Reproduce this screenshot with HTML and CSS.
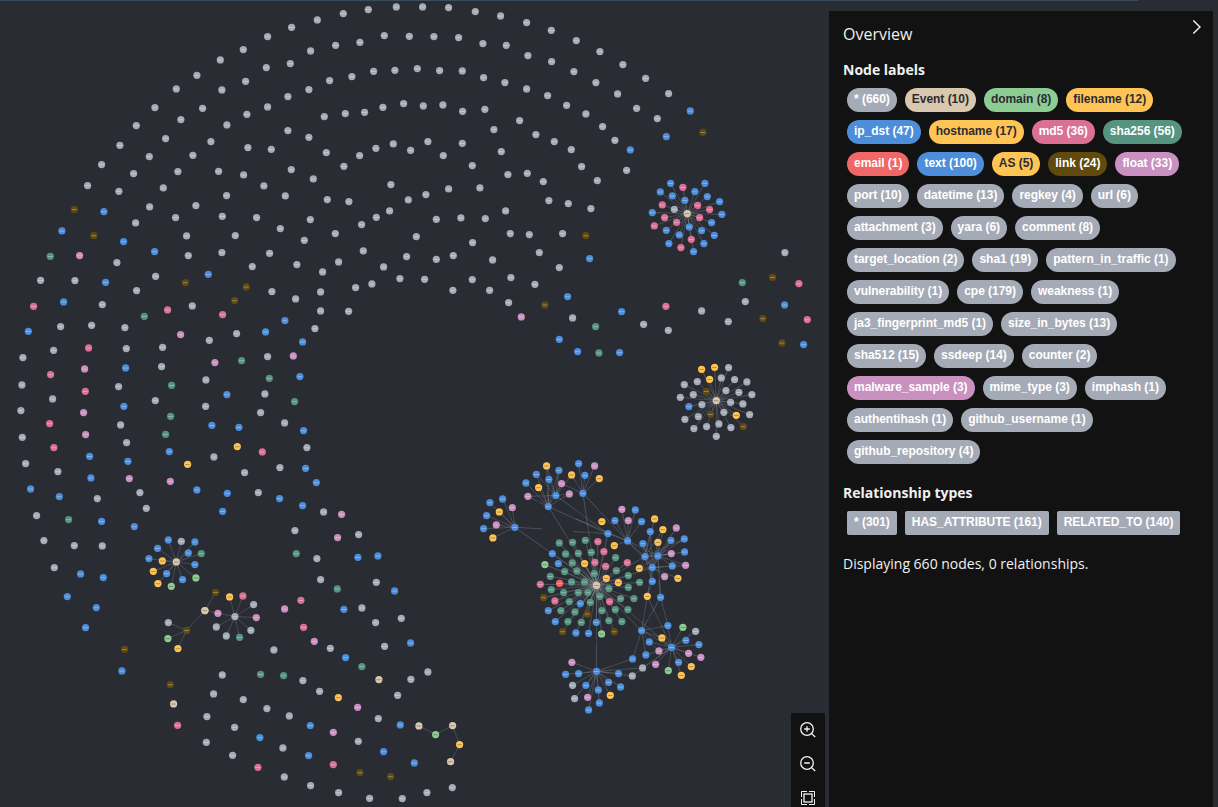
FILE: index.html
```html
<!DOCTYPE html>
<html lang="en">
<head>
<meta charset="utf-8">
<title>Graph overview</title>
<link rel="stylesheet" href="styles.css">
</head>
<body>
<div class="progress"></div>
<main class="frame">
  <section class="canvas">
    <svg class="graph" id="graph" width="829" height="807" viewBox="0 0 829 807"></svg>
    <div class="zoom-controls">
      <button class="zoom-button" aria-label="Zoom in">
        <svg width="18" height="18" viewBox="0 0 18 18"><circle cx="8" cy="8" r="6.3"/><path d="M12.6 12.6 16.2 16M8 5.2v5.6M5.2 8h5.6"/></svg>
      </button>
      <button class="zoom-button" aria-label="Zoom out">
        <svg width="18" height="18" viewBox="0 0 18 18"><circle cx="8" cy="8" r="6.3"/><path d="M12.6 12.6 16.2 16M5.2 8h5.6"/></svg>
      </button>
      <button class="zoom-button" aria-label="Zoom to fit">
        <svg width="18" height="18" viewBox="0 0 18 18"><rect x="5" y="5" width="8" height="8"/><path class="corners" d="M2.5 8V2.500H8M10 2.500h5.500V8M15.500 10v5.500H10M8 15.500H2.500V10"/></svg>
      </button>
    </div>
  </section>
  <aside class="panel">
    <header class="panel-head">
      <h2 class="panel-title">Overview</h2>
      <svg class="chevron" width="12" height="18" viewBox="0 0 12 18"><path d="M2.300 2.500 9 9l-6.700 6.500"/></svg>
    </header>
    <h3 class="panel-subtitle">Node labels</h3>
    <div class="chips">
      <span class="chip">* (660)</span><span class="chip event">Event (10)</span><span class="chip domain">domain (8)</span><span class="chip amber">filename (12)</span>
      <span class="chip blue">ip_dst (47)</span><span class="chip amber">hostname (17)</span><span class="chip rose">md5 (36)</span><span class="chip teal">sha256 (56)</span>
      <span class="chip red">email (1)</span><span class="chip blue">text (100)</span><span class="chip amber">AS (5)</span><span class="chip brown">link (24)</span><span class="chip orchid">float (33)</span>
      <span class="chip">port (10)</span><span class="chip">datetime (13)</span><span class="chip">regkey (4)</span><span class="chip">url (6)</span>
      <span class="chip">attachment (3)</span><span class="chip">yara (6)</span><span class="chip">comment (8)</span>
      <span class="chip">target_location (2)</span><span class="chip">sha1 (19)</span><span class="chip">pattern_in_traffic (1)</span>
      <span class="chip">vulnerability (1)</span><span class="chip">cpe (179)</span><span class="chip">weakness (1)</span>
      <span class="chip">ja3_fingerprint_md5 (1)</span><span class="chip">size_in_bytes (13)</span>
      <span class="chip">sha512 (15)</span><span class="chip">ssdeep (14)</span><span class="chip">counter (2)</span>
      <span class="chip orchid">malware_sample (3)</span><span class="chip">mime_type (3)</span><span class="chip">imphash (1)</span>
      <span class="chip">authentihash (1)</span><span class="chip">github_username (1)</span>
      <span class="chip">github_repository (4)</span>
    </div>
    <h3 class="panel-subtitle relations">Relationship types</h3>
    <div class="chips">
      <span class="chip square">* (301)</span><span class="chip square">HAS_ATTRIBUTE (161)</span><span class="chip square">RELATED_TO (140)</span>
    </div>
    <p class="summary">Displaying 660 nodes, 0 relationships.</p>
  </aside>
</main>
<script src="graph.js"></script>
</body>
</html>
```
FILE: styles.css
```css
* { box-sizing: border-box; }
body {
  margin: 0;
  height: 807px;
  overflow: hidden;
  background: #2a2c34;
  font-family: "Open Sans", "Noto Sans", sans-serif;
  color: #f0f0f0;
}
.progress { position: absolute; top: 0; left: 0; width: 1138px; height: 1px; background: #3a4c5d; }
.frame { display: flex; height: 807px; }
.canvas { position: relative; width: 829px; flex: none; }
.graph { display: block; }
.edge { stroke: #a5abb6; stroke-width: .6; stroke-opacity: .5; }
.edge-label { stroke: #2a2c34; stroke-width: 1; stroke-dasharray: 1 1.2; stroke-opacity: .7; }
.caption { fill: #fff; fill-opacity: .38; }
.caption.dark { fill: #2a2c34; fill-opacity: .38; }

.zoom-controls {
  position: absolute;
  right: 4px;
  bottom: 0;
  width: 34px;
  height: 94px;
  overflow: hidden;
  background: #121212;
}
.zoom-button {
  display: flex;
  align-items: center;
  justify-content: center;
  width: 34px;
  height: 34px;
  padding: 0;
  border: 0;
  background: none;
}
.zoom-button svg { fill: none; stroke: #f4f4f4; stroke-width: 1.3; }
.zoom-button .corners { stroke-width: 1; }

.panel {
  width: 384px;
  flex: none;
  margin-top: 11px;
  padding: 0 14px;
  background: #121212;
}
.panel-head { display: flex; justify-content: space-between; height: 46px; }
.panel-title { margin: 11px 0 0; font-size: 16px; line-height: 24px; font-weight: 400; }
.chevron { margin: 7px -4px 0 0; fill: none; stroke: #f4f4f4; stroke-width: 1.4; }
.panel-subtitle { margin: 3px 0 0; font-size: 14px; line-height: 20px; font-weight: 700; }
.panel-subtitle.relations { margin-top: 11px; }
.chips { display: flex; flex-wrap: wrap; gap: 8px; padding: 8px 4px; }
.chip {
  height: 24px;
  padding: 0 7px;
  border-radius: 12px;
  background: #a5abb6;
  color: #fff;
  font: bold 12px/22px "Liberation Sans", Arial, sans-serif;
  letter-spacing: -.03px;
  white-space: nowrap;
}
.chip.square { border-radius: 2px; }
.chip.event { background: #d9c8ae; color: #2a2c34; }
.chip.domain { background: #8dcc93; color: #2a2c34; }
.chip.amber { background: #ffc454; color: #2a2c34; }
.chip.blue { background: #4c8eda; }
.chip.rose { background: #da7194; }
.chip.teal { background: #569480; }
.chip.red { background: #f16667; }
.chip.brown { background: #604a0e; }
.chip.orchid { background: #c990c0; }
.summary { margin: 11px 0 0; font-size: 14px; line-height: 20px; }
```
FILE: graph.js
```js
const COLORS = {
  g: "#a5abb6", b: "#4c8eda", p: "#da7194", t: "#569480", y: "#ffc454",
  o: "#604a0e", f: "#c990c0", e: "#f16667", d: "#8dcc93", n: "#d9c8ae"
};

// Each region has an origin; positions are in thirds of a pixel from it.
// "nodes" maps a colour key to "x,y" pairs. "stars" are a hub and its leaves,
// and "links" are plain "x,y x,y" segments.
const REGIONS = [
  { at: [0, 0], nodes: {
    g: "802,109 729,148 660,179 798,202 590,225 736,243 528,266 665,269 464,322 607,324 802,320 740,342 542,358 408,376 680,374 496,415 632,424 359,435 743,442 813,447 447,469 578,465 304,493 533,514 655,513 730,524 400,520 262,556 356,573 489,563 791,557 679,586 448,620 587,616 526,652 666,648 769,652 406,668 559,707 705,706 564,766 665,757 808,759 350,787 756,799",
    o: "222,627 281,706", b: "311,634 185,692 370,724 463,754", t: "150,768", f: "238,766" } },
  { at: [270, 0], nodes: {
    g: "64,81 141,59 219,40 294,28 378,20 457,20 535,22 615,34 691,47 769,67 60,190 121,152 196,135 269,126 342,106 417,108 491,109 565,112 638,130 708,135 773,166 53,289 116,268 178,241 245,229 310,213 374,210 441,205 508,211 576,212 640,232 704,247 769,266 162,349 225,340 283,336 338,321 400,310 459,317 518,314 577,333 644,327 748,361 671,388 797,403 53,391 116,411 168,457 221,498 268,466 317,444 369,431 421,450 473,424 519,466 576,429 606,496 693,454 713,523 771,519 63,508 129,536 45,587 171,598 236,604 362,553 414,599 467,583 535,566 629,563 120,658 274,673 318,651 358,632 498,657 572,653 645,655 706,632 30,685 102,720 195,700 438,709 607,727 720,700 777,703 807,757 279,752 409,769 498,777 549,766 667,779 205,785 80,793 340,800" } },
  { at: [540, 0], nodes: {
    g: "33,90 108,121 179,154 248,193 316,234 385,280 34,184 101,214 167,247 232,281 289,324 351,355 22,286 79,315 137,341 187,379 224,420 42,424 93,448 124,499 171,541 259,510 9,544 26,601 84,610 152,625 67,700 57,802 734,757",
    b: "450,332 378,409 270,449 148,775", o: "488,396 137,706" },
    stars: [{ hub: "n 441,640", leaves: {
      b: "391,549 494,549 360,575 464,574 396,587 501,589 434,600 538,604 336,637 545,642 514,667 447,680 378,690 484,691 417,704 522,705 386,730 491,730 460,754",
      p: "428,561 366,614 472,615 508,628 373,652 478,652 409,666 342,677 453,717 422,742", g: "402,627" } }] },
  { at: [0, 260], nodes: {
    g: "121,60 224,61 466,48 409,91 306,133 181,199 274,195 374,202 576,137 815,94 709,220 627,240 160,270 378,265 487,261 68,292 484,319 802,289 65,374 355,379 617,359 157,416 465,421 616,438 794,401 62,451 361,494 781,457 66,531 379,547 641,590 76,610 173,634 733,637 419,697 291,715 774,697 438,744 109,766",
    b: "316,66 624,42 190,125 84,213 796,215 376,323 371,438 680,403 635,495 716,501 268,588 507,574 383,603 272,653 91,686 177,709 590,689 681,699 667,753 304,783 402,799",
    o: "555,67 738,80 703,121", p: "100,138 502,149 667,163 265,263 151,343 255,393 148,490 161,562 786,575",
    t: "432,168 724,301 807,354 514,375 511,468 496,522 205,778", f: "541,223 644,307 253,326 250,457 256,523 387,655 510,663", y: "711,559 562,612" } },
  { at: [270, 260], nodes: {
    g: "157,35 76,116 151,95 151,152 256,82 305,71 389,55 463,57 548,90 606,58 658,90 722,52 794,72 715,127 235,153 134,205 43,488 110,562 29,622 160,755 74,811",
    b: "44,181 97,245 89,349 100,511 106,624 138,667 28,715 97,736", f: "69,287 753,170 214,762", t: "73,424", o: "824,134" } },
  { at: [540, 240], nodes: {
    g: "97,233 310,252 384,270 484,212 564,244 615,184", b: "82,169 244,214 57,297 112,334 238,337 733,194 790,313",
    t: "606,127 166,259 176,338", p: "377,198 776,130 801,238", o: "697,111 668,235 725,308" },
    stars: [{ hub: "n 528,481", leaves: {
      y: "484,387 523,381 508,417 588,525",
      g: "565,382 543,413 583,418 620,425 471,424 432,433 557,451 596,456 635,463 459,463 420,471 485,493 571,486 608,491 628,523 551,516 474,529 434,537 536,551 499,559 461,565 572,562 528,588",
      b: "446,499", o: "498,453 511,522 609,559" } }] },
  { at: [0, 520], nodes: {
    g: "131,61 222,76 306,77 162,142 821,389 666,464 640,521 729,538 800,565 620,589 703,621 618,666 697,705",
    b: "241,161 309,172 201,229 288,262 256,322 365,452 779,652", o: "373,387 510,493", n: "520,551", p: "532,615 773,741", t: "781,462" },
    stars: [
      { hub: "n 528,125", leaves: { b: "504,59 584,65 472,84 564,98 446,115 584,133 499,160 547,178", g: "543,63", t: "603,100", y: "486,122 459,153 473,190", d: "587,173 513,198" } },
      { hub: "g 704,289", leaves: { y: "688,230", p: "728,227", g: "760,253 752,330 678,347 648,320", f: "768,292 653,279", t: "718,351" } },
      { hub: "o 559,330", leaves: { g: "504,307", d: "503,355", y: "533,385", n: "614,271" } },
      { hub: "n 614,271", leaves: { o: "646,216" } }],
    links: ["614,271 653,279"] },
  { at: [270, 520], nodes: {
    g: "265,43 140,115 151,178 318,186 275,263 393,294 316,307 343,378 180,384 98,481 148,513 473,455 422,477 382,525 324,595 57,587 264,663 38,683 42,770 121,796 205,817 298,834 396,835 470,817 546,802",
    f: "202,52 43,266 132,363 262,561 189,636", t: "78,100 201,206 275,439 40,466",
    b: "263,111 323,107 373,212 221,267 421,368 226,412 120,616 390,614 115,706 340,694 432,728",
    p: "92,240 100,321 189,733", n: "326,478 446,617 547,616 541,724", y: "204,532 568,673", o: "269,757 361,769", d: "496,643" },
    links: ["446,617 496,643", "496,643 547,616", "547,616 568,673", "568,673 541,724"] },
  { at: [470, 450], nodes: {
    b: "413,250", y: "395,214 507,354 531,438 432,286", b2: "571,441 546,393" },
    stars: [
      { hub: "b 134,231", leaves: { b: "59,157 97,146 49,196 40,235", y: "87,185 68,263", f: "126,172 78,224" } },
      { hub: "b 234,169", leaves: { b: "198,72 236,87 167,98", y: "205,112", f: "173,138 297,131" } },
      { hub: "b 257,136", leaves: { y: "229,47", b: "266,60", f: "274,100" } },
      { hub: "b 338,129", leaves: { b: "325,40 344,75", f: "373,47", y: "387,85 304,74" } },
      { hub: "b 472,272", leaves: { b: "434,211 495,179 514,214", f: "455,177 474,211" } },
      { hub: "b 524,319", leaves: { b: "518,280 540,244", y: "553,206" } },
      { hub: "b 563,317", leaves: { y: "578,238 563,276", f: "618,233 603,310", b: "602,270 642,266 643,305" } },
      { hub: "b 546,352", leaves: { b: "606,347", f: "646,345 583,379", y: "623,384" } },
      { hub: "n 379,405", leaves: {
        t: "267,278 307,276 345,270 286,311 324,309 363,306 436,322 306,338 438,361 283,364 320,362 372,370 240,378 474,376 304,395 343,395 508,396 416,415 474,411 243,418 280,427 324,427 353,427 389,438 451,445 491,445 297,454 360,456 272,481 314,485 395,481 435,478 473,478 293,514 333,516 416,511 455,514",
        p: "383,274 401,304 374,336 406,348 471,337 210,402 254,452 418,454", y: "343,340 408,384 444,397",
        b: "246,310 264,340 330,460 234,481 255,514 378,516 317,548 355,549", d: "224,343 394,551", e: "268,399", o: "220,442 351,491 277,544 432,544" } }],
    links: ["134,231 379,405", "134,231 216,236", "234,169 379,405", "257,136 413,250", "257,136 173,138", "257,136 198,72", "257,136 236,87", "234,169 229,47", "234,169 266,60", "234,169 274,100", "234,169 413,250", "315,205 472,272", "338,129 379,405", "338,129 472,272", "338,129 274,100", "257,136 304,74", "257,136 297,131", "413,250 379,405", "413,250 310,244", "413,250 472,272", "432,286 472,272", "472,272 524,319", "472,272 563,317", "472,272 546,352", "524,319 379,405", "524,319 563,317", "524,319 546,352", "546,352 563,317", "524,319 603,310", "546,352 540,244", "546,352 518,280", "546,352 379,405", "524,319 507,354", "563,317 606,347", "563,317 646,345", "563,317 507,354", "524,319 578,238", "546,352 563,276", "546,352 602,270", "546,352 507,354", "546,352 531,438", "546,352 546,393", "563,317 571,441", "524,319 546,393", "524,319 642,266", "379,405 514,541", "379,405 604,591", "379,405 379,663"] },
  { at: [530, 580], nodes: {},
    stars: [
      { hub: "b 424,201", leaves: { y: "395,173 483,259 453,285", b: "413,136 467,180 506,193 445,246 357,185 347,224", f: "386,212 376,252 475,219 512,231", g: "496,153 337,263 306,287", d: "458,141 414,271" } },
      { hub: "b 334,151", leaves: { b: "307,236" } },
      { hub: "b 199,273", leaves: { f: "125,246 172,351", b: "145,280 106,282 167,315 204,329 235,306 265,280 271,320 207,368 175,389", g: "127,315 133,355", y: "240,345" } }],
    links: ["334,151 351,48", "334,151 391,51", "424,201 351,48", "391,51 413,136", "351,48 366,3", "391,51 386,0", "334,151 413,136", "334,151 395,173", "334,151 357,185", "334,151 347,224", "334,151 424,201", "357,185 386,212", "199,273 307,236", "199,273 337,263", "199,273 306,287"] }
];

const edges = [];
const nodes = [];

for (const region of REGIONS) {
  const place = pair => pair.split(",").map((v, i) => region.at[i] + (Number(v) + .8) / 3);
  const addNodes = groups => {
    for (const [key, list] of Object.entries(groups)) {
      for (const pair of list.split(" ")) nodes.push([key[0], ...place(pair)]);
    }
  };
  for (const star of region.stars || []) {
    const [key, pair] = star.hub.split(" ");
    for (const list of Object.values(star.leaves)) {
      for (const leaf of list.split(" ")) edges.push([...place(pair), ...place(leaf)]);
    }
    addNodes(star.leaves);
    nodes.push([key, ...place(pair)]);
  }
  addNodes(region.nodes);
  for (const link of region.links || []) edges.push(link.split(" ").flatMap(place));
}

const between = ([x1, y1, x2, y2], t) => [x1 + (x2 - x1) * t, y1 + (y2 - y1) * t];
const line = (cls, a, b) =>
  `<line class="${cls}" x1="${a[0].toFixed(1)}" y1="${a[1].toFixed(1)}" x2="${b[0].toFixed(1)}" y2="${b[1].toFixed(1)}"/>`;

let out = "";
for (const e of edges) {
  out += line("edge", between(e, 0), between(e, 1));
  out += line("edge-label", between(e, .35), between(e, .7));
}
for (const [key, x, y] of nodes) {
  const dark = "ydn".includes(key) ? " dark" : "";
  out += `<circle cx="${x.toFixed(1)}" cy="${y.toFixed(1)}" r="3.6" fill="${COLORS[key]}"/>`;
  out += `<rect class="caption${dark}" x="${(x - 2.4).toFixed(1)}" y="${(y - .3).toFixed(1)}" width="4.6" height=".9"/>`;
}
document.getElementById("graph").innerHTML = out;
```
